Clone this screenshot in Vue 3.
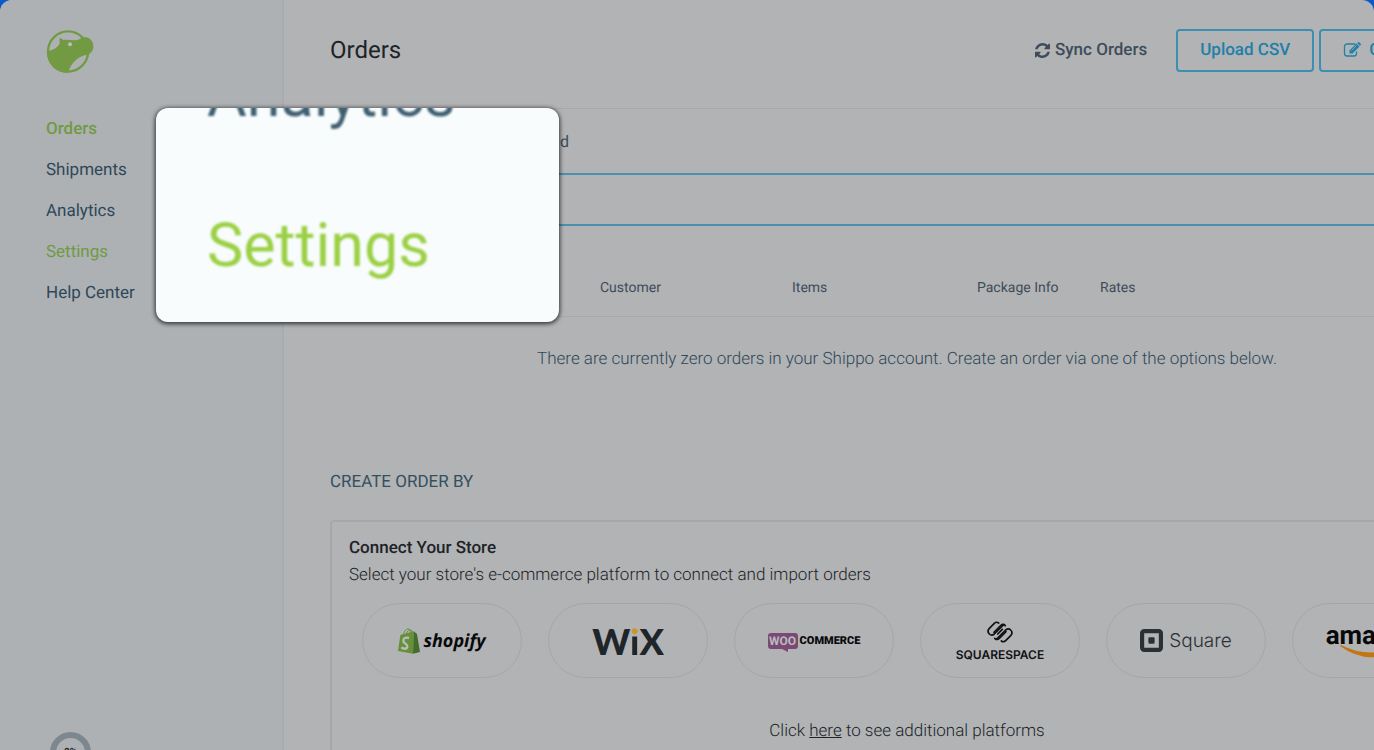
<template>
  <div class="app-frame">
    <aside class="sidebar">
      <a class="brand" href="#" aria-label="Home">
        <svg class="brand-mark" viewBox="138 88 146 136">
          <circle cx="205" cy="156" r="61" fill="none" stroke="#719a43" stroke-width="7" />
          <path
            fill="#719a43"
            d="M141 155C158 153 172 146 180 131C178 124 179 118 181 114L191 121C207 119 222 124 236 120C247 114 256 111 265 114C276 118 282 128 282 140C282 153 275 163 263 166C236 171 216 190 208 213L203 221C166 220 140 192 141 155Z"
          />
          <circle cx="211" cy="134" r="6" fill="#b9bdbc" />
        </svg>
      </a>
      <nav class="menu">
        <a
          v-for="item in menu"
          :key="item.label"
          href="#"
          class="menu-link"
          :class="{ active: item.active, current: item.current }"
        >{{ item.label }}</a>
      </nav>
      <div class="progress"><span>0%</span></div>
    </aside>

    <main class="content">
      <header class="page-header">
        <h1>Orders</h1>
        <div class="actions">
          <button type="button" class="sync">
            <svg class="sync-icon" viewBox="0 0 1536 1536">
              <path
                fill="currentColor"
                d="M1511 928q0 5-1 7-64 268-268 434.500T764 1536q-146 0-282.500-55T238 1324l-129 129q-19 19-45 19t-45-19-19-45V960q0-26 19-45t45-19h448q26 0 45 19t19 45-19 45l-137 137q71 66 161 102t187 36q134 0 250-65t186-179q11-17 53-117 8-23 30-23h192q13 0 22.500 9.500t9.500 22.500zM1536 128v448q0 26-19 45t-45 19h-448q-26 0-45-19t-19-45 19-45l138-138Q969 256 768 256q-134 0-250 65T332 500q-11 17-53 117-8 23-30 23H50q-13 0-22.500-9.500T18 608v-7q65-268 270-434.500T768 0q146 0 284 55.500T1297 212l130-129q19-19 45-19t45 19 19 45z"
              />
            </svg>
            Sync Orders
          </button>
          <button type="button" class="outlined">Upload CSV</button>
          <button type="button" class="outlined create">
            <svg class="edit-icon" viewBox="0 0 18 16" fill="none" stroke="currentColor">
              <path d="M12.500 2H4a2.500 2.500 0 0 0-2.500 2.500v7A2.500 2.500 0 0 0 4 14h7a2.500 2.500 0 0 0 2.500-2.500V9.500" stroke-width="1.300" />
              <path d="M6.500 8.500L13.500 1.500L16.500 4.500L9.500 11.500H6.500Z" fill="currentColor" stroke="none" />
              <path d="M14.200 1L15 .2Q15.600-.2 16.200.3L17.700 1.800Q18.200 2.400 17.700 3L17 3.800Z" fill="currentColor" stroke="none" />
              <path d="M8.500 8.500L13.500 3.500" stroke="#b2b3b5" stroke-width=".7" />
            </svg>
            Create Order
          </button>
        </div>
      </header>

      <div class="tabs">
        <button type="button" class="tab">d</button>
      </div>
      <div class="filters"></div>

      <table class="orders">
        <thead>
          <tr>
            <th class="col-select"></th>
            <th class="col-customer">Customer</th>
            <th class="col-items">Items</th>
            <th class="col-package">Package Info</th>
            <th>Rates</th>
          </tr>
        </thead>
      </table>
      <p class="empty">
        There are currently zero orders in your Shippo account. Create an order via one of the options below.
      </p>

      <section class="create-section">
        <h2>CREATE ORDER BY</h2>
        <div class="panel">
          <h3>Connect Your Store</h3>
          <p class="panel-text">Select your store's e-commerce platform to connect and import orders</p>
          <div class="stores">
            <button type="button" class="store">
              <svg class="bag" viewBox="0 0 66 78">
                <path d="M16 22C18 8 26 2 32 3C38 4 39 12 39 19M24 20C28 7 36 2 42 9L45 17" fill="none" stroke="#66913a" stroke-width="3" />
                <path d="M7 21L47 10L45 77L0 69Z" fill="#66913a" />
                <path d="M47 10L57 18L66 72L45 77Z" fill="#446d2c" />
                <path d="M33 30Q16 26 16 38C16 47 29 47 28 56C27 65 16 63 10 58" fill="none" stroke="#b9bdba" stroke-width="7" />
              </svg>
              <span class="shopify-name">shopify</span>
            </button>
            <button type="button" class="store">
              <span class="wix-name">W<span class="wix-i">i</span>X</span>
            </button>
            <button type="button" class="store woo">
              <span class="woo-bubble">WOO</span>
              <span class="commerce">COMMERCE</span>
            </button>
            <button type="button" class="store squarespace">
              <svg class="squarespace-mark" viewBox="0 0 78 64" fill="none" stroke="#101113" stroke-width="5" stroke-linecap="round">
                <path d="M21 33L41 13Q48 6 55 13" />
                <path d="M35 5Q28 0 22 6L7 21Q-1 30 7 38Q14 45 22 38L50 10" />
                <path d="M57 31L37 51Q30 58 23 51" />
                <path d="M28 54L56 26Q64 19 71 26Q79 34 71 43L56 58Q50 64 43 59" />
                <path d="M32 38L46 24" />
              </svg>
              <span>SQUARESPACE</span>
            </button>
            <button type="button" class="store square">
              <svg class="square-mark" viewBox="0 0 22 22">
                <rect x="2" y="2" width="18" height="18" rx="2" fill="none" stroke="#2b3037" stroke-width="4" />
                <rect x="8" y="8" width="6" height="6" rx="1" fill="#2b3037" />
              </svg>
              <span>Square</span>
            </button>
            <button type="button" class="store amazon">
              <span>amazon</span>
              <svg class="smile" viewBox="0 0 64 14">
                <path d="M1 1Q28 15 58 3L60 5Q29 23 0 2Z" fill="#c27510" />
              </svg>
            </button>
          </div>
          <p class="more">Click <a href="#">here</a> to see additional platforms</p>
        </div>
      </section>
    </main>

    <div class="magnifier">
      <span class="zoomed">Analytics</span>
      <span class="zoomed current">Settings</span>
    </div>
  </div>
</template>

<script setup>
import { ref } from "vue";

const menu = ref([
  { label: "Orders", active: true },
  { label: "Shipments" },
  { label: "Analytics" },
  { label: "Settings", current: true },
  { label: "Help Center" },
]);
</script>

<style>
body {
  margin: 0;
  background: #075ac8;
}
</style>

<style scoped>
.app-frame {
  position: relative;
  display: flex;
  height: 100vh;
  overflow: hidden;
  border-radius: 12px 12px 0 0;
  background: #b2b3b5;
  font-family: Roboto, "Liberation Sans", sans-serif;
  text-rendering: geometricPrecision;
  color: #202327;
}

h1,
h2,
h3,
p {
  margin: 0;
}

button {
  padding: 0;
  border: none;
  background: none;
  font: inherit;
  color: inherit;
  white-space: nowrap;
  text-rendering: inherit;
}

.sidebar {
  box-sizing: border-box;
  display: flex;
  flex: 0 0 284px;
  flex-direction: column;
  align-items: flex-start;
  padding: 29px 46px 0;
  border-right: 2px solid #a9abae;
  background: #adb1b4;
}

.brand,
.brand-mark {
  display: block;
  width: 48px;
  height: 45px;
}

.menu {
  display: flex;
  flex-direction: column;
  margin-top: 35px;
}

.menu-link {
  font-size: 17px;
  line-height: 41px;
  color: #2f4858;
  text-decoration: none;
}

.menu-link.active {
  font-weight: 500;
}

.menu-link.active,
.menu-link.current {
  color: #719a43;
}

.progress {
  box-sizing: border-box;
  width: 41px;
  height: 41px;
  margin: auto 0 -23px 4px;
  border: 6px solid #7f878e;
  border-radius: 50%;
  font-size: 10px;
  font-weight: 700;
  line-height: 29px;
  text-align: center;
}

.content {
  flex: 1 0 1246px;
  min-width: 0;
}

.page-header {
  box-sizing: border-box;
  display: flex;
  align-items: center;
  height: 109px;
  padding: 0 0 8px 46px;
  border-bottom: 1px solid #a3a9ae;
}

.page-header h1 {
  flex: 0 0 705px;
  font-size: 24px;
  font-weight: 400;
}

.actions {
  display: flex;
  align-items: center;
}

.sync {
  display: flex;
  align-items: center;
  gap: 5px;
  margin-right: 29px;
  font-size: 17px;
  font-weight: 500;
  color: #3e4c5a;
}

.sync-icon {
  width: 15px;
  height: 15px;
}

.outlined {
  box-sizing: border-box;
  height: 43px;
  margin-right: 5px;
  padding: 0 22px;
  border: 2px solid #3c8fb0;
  border-radius: 4px;
  font-size: 17px;
  font-weight: 500;
  color: #2180a8;
}

.create {
  display: flex;
  align-items: center;
  gap: 8px;
}

.edit-icon {
  width: 18px;
  height: 16px;
}

.tabs {
  display: flex;
  height: 64px;
  padding-left: 276px;
  border-bottom: 2px solid #4a91b0;
}

.tab {
  font-size: 16px;
  color: #3e4c5a;
}

.filters {
  height: 49px;
  border-bottom: 2px solid #4a91b0;
}

.orders {
  width: 100%;
  border-collapse: collapse;
  table-layout: fixed;
}

.orders th {
  height: 56px;
  padding: 34px 0 0;
  border-bottom: 1px solid #a3a9ae;
  font-size: 14px;
  font-weight: 400;
  text-align: left;
  color: #3e4c5a;
}

.orders .col-select {
  width: 316px;
}

.orders .col-customer {
  width: 192px;
}

.orders .col-items {
  width: 185px;
}

.orders .col-package {
  width: 123px;
}

.empty {
  margin-top: 30px;
  font-size: 17px;
  font-weight: 300;
  line-height: 24px;
  text-align: center;
  color: #2f4858;
}

.create-section {
  padding: 99px 46px 0;
}

.create-section h2 {
  font-size: 17px;
  font-weight: 400;
  line-height: 24px;
  color: #34505f;
}

.panel {
  margin-top: 26px;
  padding: 14px 17px 20px;
  border: 2px solid #a5a7aa;
  border-radius: 4px;
}

.panel h3 {
  font-size: 17px;
  font-weight: 500;
  line-height: 24px;
}

.panel-text {
  margin-top: 2px;
  font-size: 17px;
  font-weight: 300;
  line-height: 26px;
}

.stores {
  display: grid;
  grid-template-columns: repeat(6, 1fr);
  justify-items: center;
  margin-top: 15px;
}

.store {
  box-sizing: border-box;
  display: flex;
  align-items: center;
  justify-content: center;
  gap: 3px;
  width: 160px;
  height: 75px;
  border: 1px solid #a0a8af;
  border-radius: 38px;
}

.bag {
  width: 22px;
  height: 26px;
}

.shopify-name {
  font-family: "Open Sans", sans-serif;
  font-size: 18px;
  font-style: italic;
  font-weight: 700;
  line-height: 28px;
  color: #08090a;
}

.wix-name {
  font-family: Lato, sans-serif;
  font-size: 36px;
  font-weight: 900;
  line-height: 48px;
  color: #202529;
}

.wix-i {
  background: linear-gradient(#c8962b 17px, #202529 17px);
  background-clip: text;
  color: transparent;
}

.woo {
  gap: 2px;
}

.woo-bubble {
  position: relative;
  width: 30px;
  border-radius: 3px;
  background: #7a4a74;
  font-size: 12px;
  font-weight: 700;
  line-height: 16px;
  text-align: center;
  color: #b9bbbd;
}

.woo-bubble::after {
  content: "";
  position: absolute;
  top: 16px;
  left: 14px;
  border-top: 3px solid #7a4a74;
  border-left: 6px solid transparent;
}

.commerce {
  font-size: 11px;
  font-weight: 900;
  color: #08090a;
}

.squarespace {
  flex-direction: column;
  gap: 4px;
  padding-top: 3px;
  font-family: Inter, sans-serif;
  font-size: 12px;
  font-weight: 600;
  line-height: 16px;
  color: #101113;
}

.squarespace-mark {
  width: 26px;
  height: 22px;
}

.square {
  gap: 6px;
  font-family: Inter, sans-serif;
  font-size: 19px;
  font-weight: 300;
  color: #2b3037;
}

.square-mark {
  width: 23px;
  height: 23px;
}

.amazon {
  flex-direction: column;
  gap: 0;
  font-size: 26px;
  font-weight: 700;
  line-height: 24px;
  color: #08090a;
}

.smile {
  width: 64px;
  height: 14px;
  margin-top: -4px;
}

.more {
  margin-top: 40px;
  font-size: 17px;
  font-weight: 300;
  line-height: 26px;
  text-align: center;
}

.more a {
  color: inherit;
}

.magnifier {
  position: absolute;
  top: 108px;
  left: 156px;
  box-sizing: border-box;
  display: flex;
  flex-direction: column;
  justify-content: flex-end;
  gap: 94px;
  width: 403px;
  height: 214px;
  padding: 0 0 49px 51px;
  overflow: hidden;
  border-radius: 12px;
  background: #f8fcfd;
  box-shadow: 0 1px 4px 1px rgba(0, 0, 0, 0.7);
}

/* enlarged bitmap look of the lens */
.zoomed {
  flex: none;
  font-size: 61px;
  line-height: 56px;
  color: #3f6072;
  filter: blur(1px);
}

.zoomed.current {
  color: #9bd044;
}
</style>
